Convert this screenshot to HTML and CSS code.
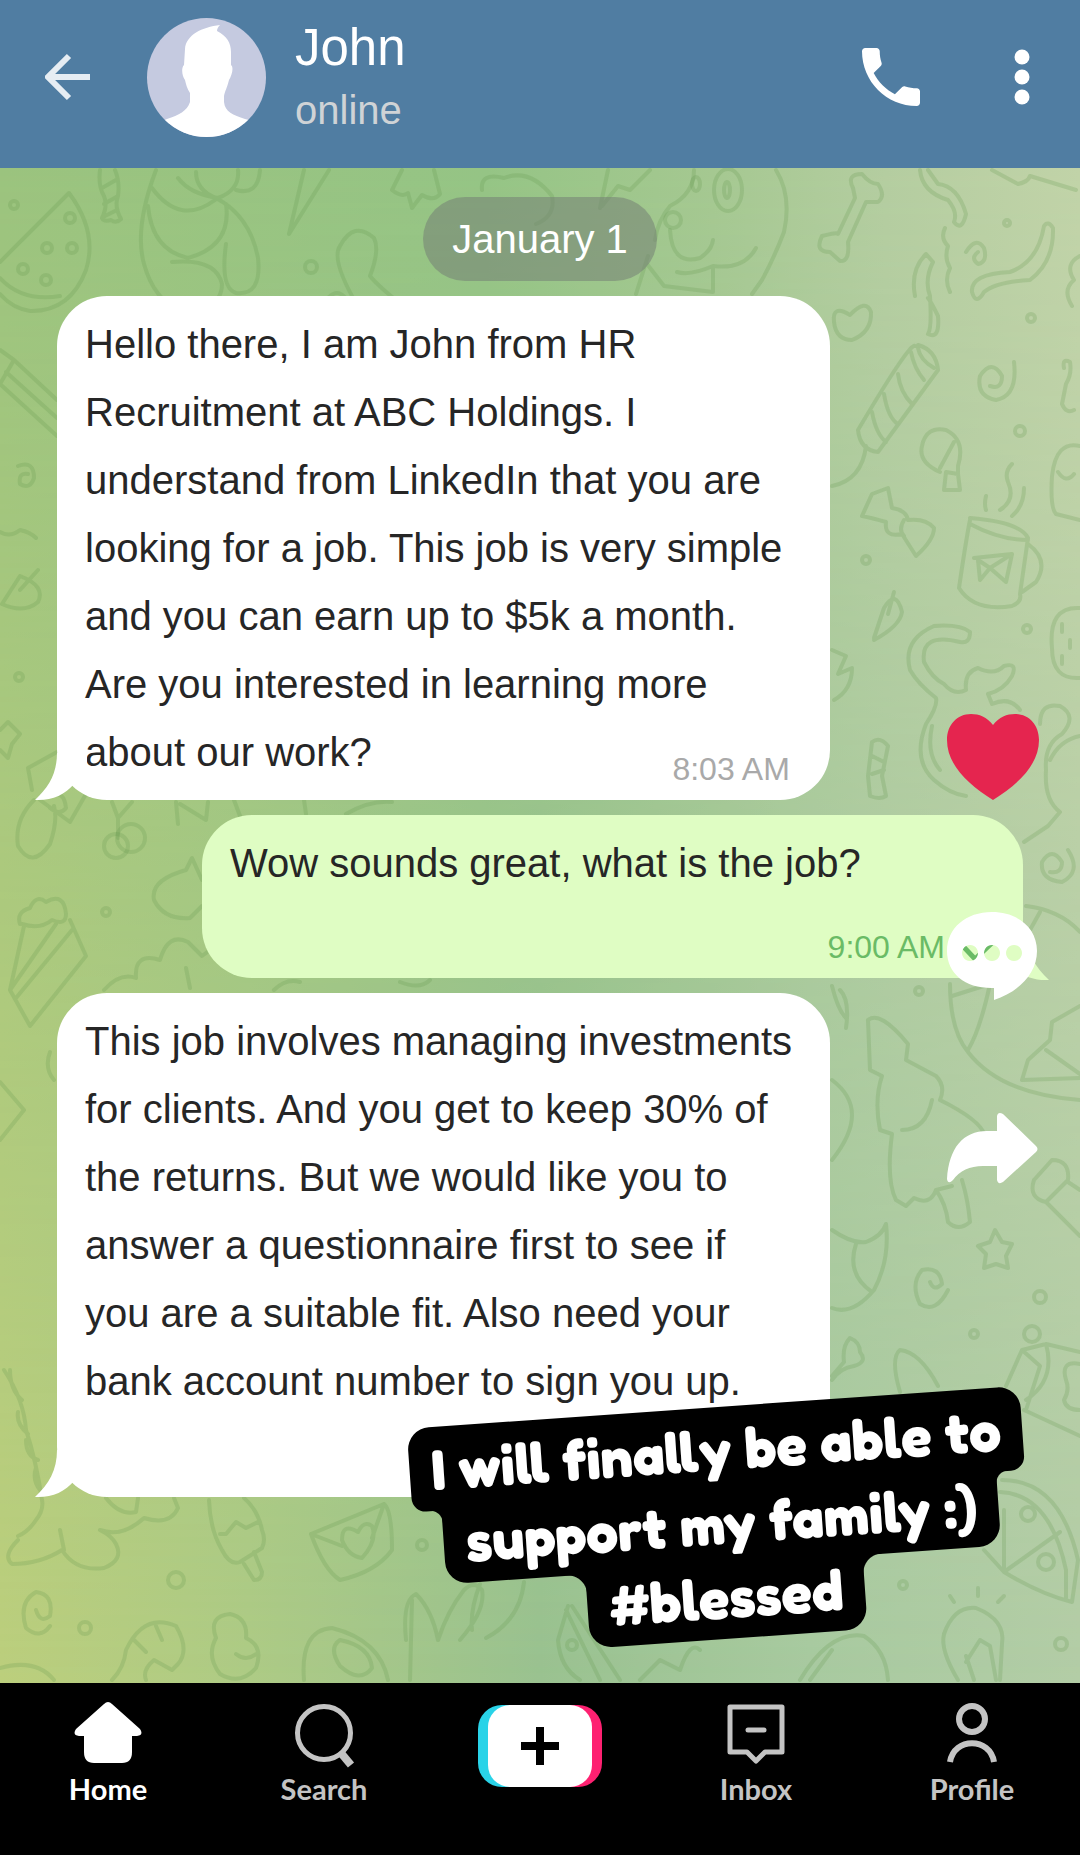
FILE: index.html
```html
<!DOCTYPE html>
<html lang="en">
<head>
<meta charset="utf-8">
<meta name="viewport" content="width=device-width, initial-scale=1">
<title>Chat with John</title>
<link rel="stylesheet" href="styles.css">
</head>
<body>
<div class="app">
  <header class="topbar">
    <button class="icon-button back" aria-label="Back">
      <svg width="46" height="48" viewBox="0 0 46 48"><path d="M3 24H45M24 3L3 24L24 45" fill="none" stroke="#e6edf3" stroke-width="6"/></svg>
    </button>
    <svg class="avatar" width="119" height="119" viewBox="0 0 119 119" role="img" aria-label="John">
      <defs><clipPath id="disc"><circle cx="59.500" cy="59.500" r="59.500"/></clipPath></defs>
      <g clip-path="url(#disc)">
        <rect width="119" height="119" fill="#c5cae0"/>
        <path d="M38 31C39 17 55 9 73 7C71 9 70 11 70 13C80 18 84 25 84 34V47C87 49 85 57 82 62C80 70 78 73 77 78V84C78 94 86 97 98 101C106 103 113 108 119 119H0C5 108 12 104 20 101C32 97 40 93 43 84V75C40 71 39 66 38 62C35 58 34 50 37 47Z" fill="#fff"/>
      </g>
    </svg>
    <div class="contact">
      <h1 class="contact-name">John</h1>
      <p class="contact-status">online</p>
    </div>
    <button class="icon-button" aria-label="Call">
      <svg width="58" height="58" viewBox="3 3 18 18"><path d="M6.620 10.790c1.440 2.830 3.760 5.140 6.590 6.590l2.200-2.200c.270-.270.670-.360 1.020-.240 1.120.370 2.330.570 3.570.570.550 0 1 .450 1 1V20c0 .550-.450 1-1 1-9.390 0-17-7.610-17-17 0-.550.450-1 1-1h3.500c.550 0 1 .450 1 1 0 1.250.200 2.450.570 3.570.110.350.030.740-.250 1.020l-2.200 2.200z" fill="#fff"/></svg>
    </button>
    <button class="icon-button more" aria-label="More options">
      <svg width="16" height="56" viewBox="0 0 16 56" fill="#fff"><circle cx="8" cy="8" r="7.500"/><circle cx="8" cy="28" r="7.500"/><circle cx="8" cy="48" r="7.500"/></svg>
    </button>
  </header>

  <main class="chat">
    <svg class="doodles" viewBox="0 168 1080 1515" preserveAspectRatio="xMidYMin slice" aria-hidden="true">
      <!-- top edge -->
      <path d="M0 262L69 193Q98 232 86 270Q70 312 30 311Q12 308 0 294M0 278Q22 302 60 296"/>
      <circle cx="14" cy="205" r="4"/><circle cx="70" cy="218" r="5"/><circle cx="47" cy="248" r="5"/><circle cx="72" cy="248" r="5"/><circle cx="23" cy="269" r="5"/><circle cx="46" cy="280" r="5"/>
      <path d="M100 170Q98 186 104 196Q108 206 102 218Q104 222 111 220Q116 224 121 219Q114 206 118 196Q120 182 115 170M102 188L116 180M104 204L118 196M105 216L117 210"/>
      <path d="M156 170Q134 228 144 264Q154 300 180 310M152 188Q180 226 215 200M148 206Q152 250 188 258Q232 246 226 204M178 178Q190 194 218 198Q240 190 238 170M196 172Q196 190 216 198M216 198Q250 216 258 258Q262 296 236 293Q220 288 226 244M172 262Q216 258 222 284Q222 300 206 310M236 190Q258 196 260 170"/>
      <path d="M304 170L289 234L329 170M402 170L392 190Q402 198 408 193L412 208L422 195Q434 202 440 194L434 170"/>
      <path d="M360 310Q330 260 340 246Q354 220 374 238Q380 250 370 276Q378 286 402 305M320 310Q338 276 352 310M482 190Q480 172 504 178Q530 168 552 196Q556 216 536 224"/>
      <circle cx="311" cy="267" r="6"/>
      <path d="M600 208L608 170M602 206L618 186L630 190L650 170M694 170Q694 194 670 206Q658 220 655 240M677 272Q690 276 713 266V292L664 286L647 264M670 230Q672 266 700 258Q712 250 713 240M713 266Q744 270 756 248M776 170Q792 196 784 232Q774 258 762 280L752 294M648 256L636 294"/>
      <ellipse cx="728" cy="190" rx="14" ry="21"/><ellipse cx="727" cy="190" rx="3" ry="8"/><circle cx="673" cy="220" r="8"/><ellipse cx="696" cy="184" rx="4" ry="7"/>
      <path d="M853 188Q846 174 862 174Q870 184 878 184Q886 196 878 202L866 202L848 242Q850 262 840 261L830 252Q814 252 822 236Q838 232 838 234L855 198Z"/>
      <path d="M920 170Q922 192 948 200Q958 212 954 222Q962 232 966 214Q958 186 938 184L928 170M992 170L1018 184Q1028 182 1030 176L1076 190M1044 226Q1038 262 1010 272Q970 274 972 292Q976 306 984 292Q996 282 1030 280Q1054 262 1053 228Q1048 220 1044 226M945 228Q940 238 948 246Q944 258 950 268Q944 280 950 292M926 254L933 262Q924 280 930 296Q932 328 928 334Q940 340 938 316Q930 300 928 298M915 296Q910 270 926 254M966 252Q976 236 984 248Q988 262 978 264Q970 258 978 252M1080 256Q1064 264 1074 280Q1062 290 1072 306"/>
      <!-- right column -->
      <path d="M850 315Q832 304 834 322Q836 340 852 340Q872 332 871 312Q866 298 850 315M915 346Q910 342 858 430Q860 450 878 452L938 370Q936 350 918 345M911 352Q914 368 924 380M898 374Q900 392 912 404M884 394Q888 418 898 424M872 412Q876 434 886 442M918 348Q920 360 934 368M866 446Q862 480 832 486"/>
      <path d="M1014 362Q1018 396 996 400Q976 396 980 376Q992 358 1002 376Q1002 390 990 386"/>
      <path d="M940 472Q918 462 922 446Q926 426 946 430Q966 440 958 466L958 474L946 472L944 490L960 490L958 474M954 442L940 468M862 516L872 494L888 488L892 508Q906 510 908 520Q926 518 934 528Q934 540 916 556L902 534Q884 538 886 522Q872 518 862 516M904 520Q898 530 904 536"/>
      <path d="M970 520Q966 540 959 588Q974 612 1012 606Q1022 602 1020 594L1028 538Q1020 522 970 518M970 524Q1000 540 1028 540M1028 544Q1050 560 1036 582L1022 592M974 558L1012 554L1006 582L990 568L980 580L978 560L990 568L1012 554M986 510Q984 504 986 496M1000 510Q1016 500 1008 482Q1004 472 1012 464M1012 516Q1024 506 1024 488"/>
      <path d="M874 638L884 608Q896 588 902 612Q900 626 874 640M888 614L894 592M832 650L846 656L838 674L852 668Q852 690 834 700"/>
      <path d="M970 632Q960 624 934 626Q902 640 910 670Q918 684 936 698Q938 706 926 724Q912 760 934 780Q950 794 966 796M970 632Q970 644 960 642Q920 632 924 662Q932 678 944 684Q954 696 966 690Q964 672 978 668Q994 676 1004 666Q1018 662 1012 676Q1004 690 988 694L992 704Q1010 696 1020 710M932 726Q926 754 940 770"/>
      <path d="M1080 446Q1056 440 1052 476Q1050 508 1056 514L1080 520M1058 472Q1066 484 1074 474M1080 608Q1048 606 1052 648Q1052 680 1080 678M1062 624V632M1070 640V648M1062 656V664M1064 368Q1062 358 1070 362Q1072 374 1066 384L1062 404Q1066 414 1074 410M1040 724Q1040 702 1060 706Q1078 716 1062 734Q1044 744 1046 770Q1044 800 1060 812L1048 826L1024 842M1080 736Q1060 740 1050 760"/>
      <path d="M872 742Q880 736 888 746L882 776L886 796Q880 800 870 796L868 776ZM872 756L884 762M872 774L884 770M1068 850Q1082 872 1062 882Q1040 880 1042 862Q1052 846 1062 862Q1062 874 1050 872"/>
      <path d="M1026 906Q1060 910 1080 932M1040 912L1030 930M950 984Q950 1030 968 1052Q1000 1094 1080 1100M952 996L990 984Q980 1030 968 1050M1080 1006L1052 1022L1050 1040L1028 1060L1022 1080L1080 1078M1046 1050L1080 1074"/>
      <path d="M868 1020Q880 1010 908 1044L906 1060L936 1076Q946 1086 940 1100Q980 1120 984 1134M868 1020L870 1070L882 1076Q874 1100 880 1130L892 1134Q886 1180 896 1200L906 1206L914 1198Q930 1206 936 1190L952 1186M902 1130Q926 1130 932 1100M936 1190Q946 1204 948 1222Q958 1232 970 1222Q968 1200 962 1180M832 1080Q872 1110 832 1160M832 986Q838 1010 846 1018M840 990Q850 1000 846 1028"/>
      <path d="M1034 1180L1052 1160Q1070 1160 1068 1180L1046 1202Q1028 1198 1034 1180M1046 1202L1080 1236M1068 1182L1080 1190"/>
      <path d="M832 1230Q852 1244 866 1242Q882 1236 886 1224Q890 1260 874 1290Q852 1316 832 1308M856 1244Q846 1274 872 1292M995 1230L1002 1242L1012 1244L1006 1256L1008 1268L996 1264L984 1268L986 1254L978 1246L990 1242ZM948 1290Q936 1314 920 1304Q910 1284 922 1270Q940 1266 942 1284Q934 1292 930 1282"/>
      <path d="M832 1376L844 1362Q842 1346 850 1338Q860 1342 860 1352Q868 1362 854 1366Q840 1368 832 1380M900 1392Q890 1358 900 1350Q920 1352 938 1386M1006 1386L1022 1350L1046 1344L1080 1352M1024 1410L1080 1436M1022 1350L1040 1366L1026 1410M1046 1344Q1056 1380 1026 1400M1080 1364Q1060 1360 1066 1380Q1070 1390 1064 1400Q1066 1410 1080 1410"/>
      <path d="M1002 1480Q1060 1480 1078 1560L1072 1602Q1040 1594 1004 1572L984 1550M1000 1492Q1050 1494 1066 1570V1598M1004 1572V1510M1004 1572L1060 1532"/>
      <circle cx="1028" cy="1514" r="7"/><circle cx="1046" cy="1562" r="8"/><circle cx="1032" cy="1334" r="8"/>
      <path d="M958 1680Q940 1650 944 1634Q954 1606 976 1608Q1006 1620 1002 1644L1000 1680M966 1662L980 1640L990 1646L996 1680M974 1680L966 1656M978 1596V1588M954 1602L950 1596M998 1602L1004 1596"/>
      <circle cx="1031" cy="318" r="4"/><circle cx="1020" cy="431" r="5"/><circle cx="866" cy="560" r="4"/><circle cx="1027" cy="629" r="4"/><circle cx="919" cy="991" r="4"/><circle cx="1040" cy="1297" r="6"/><circle cx="974" cy="1334" r="4"/><circle cx="903" cy="1585" r="4"/><circle cx="1061" cy="1644" r="6"/><circle cx="1007" cy="223" r="3"/>
      <!-- left column -->
      <path d="M0 350L14 360L57 400M14 360L0 384L57 436M6 372L57 418M18 466Q34 460 34 478Q30 490 20 484Q18 472 28 474M0 532Q10 538 20 530Q30 532 36 538M2 604L20 576Q46 586 38 602Q24 614 2 604M20 590L38 570"/>
      <path d="M57 752L28 768L32 790M0 730L8 722L20 734L12 744L8 758L0 750M34 800Q14 820 18 846Q32 870 50 844Q58 820 54 806M40 800L70 822L86 794M52 796Q64 790 66 808Q60 816 50 808M112 802L118 818L132 802M118 818V838M176 802L178 824M180 804L206 820L208 802M234 800L240 816M304 800L306 814M346 814Q370 800 392 802"/>
      <circle cx="131" cy="838" r="14"/><circle cx="116" cy="846" r="12"/><circle cx="106" cy="912" r="4"/><circle cx="19" cy="677" r="4"/>
      <path d="M202 880L192 858L186 870Q150 880 154 900Q164 920 190 918L202 906M20 924Q16 912 30 908Q36 894 46 902Q64 892 66 914Q66 926 52 920Q40 930 22 924M24 926L10 990L30 1026L86 956L70 920M10 990L56 924M16 998L72 930M104 990Q120 972 136 978Q134 952 160 960Q168 932 188 942L202 956L210 950M186 968L190 988M274 990Q286 978 300 982M400 982Q420 990 430 980"/>
      <path d="M0 1082L24 1110L0 1140M50 1052Q44 1068 54 1080M4 1370Q24 1400 26 1430Q36 1460 42 1500Q44 1510 36 1520Q28 1532 18 1536M10 1370Q10 1390 22 1400M18 1412Q16 1424 28 1434M26 1440Q26 1456 38 1460M36 1468Q32 1480 40 1490"/>
      <!-- bottom edge -->
      <path d="M18 1540Q2 1556 12 1564Q40 1564 62 1550Q76 1572 104 1568Q124 1560 116 1544Q112 1536 100 1530Q122 1538 144 1518Q170 1526 178 1508L174 1498M60 1530L64 1550M106 1498Q120 1516 136 1512L138 1498M209 1500Q210 1530 222 1550Q230 1566 240 1562L262 1548Q266 1540 262 1530Q258 1510 244 1498M220 1534L226 1534L236 1522L246 1528L258 1522M244 1564L254 1580Q262 1580 262 1572L254 1552"/>
      <path d="M311 1534L384 1504Q392 1510 392 1550Q376 1572 340 1580Q324 1570 311 1534M311 1534L342 1546M384 1504L372 1538M358 1532Q342 1522 342 1540Q348 1556 362 1558Q378 1540 372 1526Q364 1520 358 1532M50 1626Q40 1640 26 1628Q18 1602 36 1592Q54 1594 50 1616Q40 1624 36 1610"/>
      <path d="M112 1680Q124 1668 126 1650Q144 1612 176 1626Q190 1650 178 1664L172 1670L154 1660Q142 1670 146 1680M156 1626L162 1640M134 1640L146 1652M216 1638Q208 1616 230 1614Q248 1618 246 1638Q264 1646 256 1668Q240 1686 220 1674Q206 1656 216 1638M236 1654Q246 1662 256 1654M0 1668Q36 1658 54 1680"/>
      <path d="M304 1680Q300 1630 332 1628Q380 1640 388 1680M340 1640Q370 1646 372 1668Q360 1684 340 1666Q328 1648 340 1640M406 1640Q402 1600 416 1594Q432 1610 438 1640Q448 1610 464 1590Q474 1580 482 1590Q486 1610 460 1640M412 1600L410 1680M524 1582Q520 1620 486 1638M480 1584Q470 1610 472 1630M568 1606L558 1640Q560 1668 580 1680M572 1606L620 1680M566 1610L600 1680M640 1680L660 1660L680 1670Q690 1640 700 1650M800 1680Q830 1630 864 1636Q886 1650 888 1680M832 1650L810 1680"/>
      <circle cx="176" cy="1580" r="8"/><circle cx="85" cy="1628" r="6"/><circle cx="422" cy="1545" r="5"/><circle cx="572" cy="1645" r="5"/>
    </svg>

    <time class="date-pill">January 1</time>

    <article class="bubble incoming">
      <p class="message">Hello there, I am John from HR Recruitment at ABC Holdings. I understand from LinkedIn that you are looking for a job. This job is very simple and you can earn up to $5k a month. Are you interested in learning more about our work?</p>
      <time class="stamp">8:03 AM</time>
      <svg class="tail" width="52" height="48" viewBox="0 0 52 48" aria-hidden="true"><path d="M22 0C22 20 14 34 0 47C16 48 30 42 39 31L52 20V0Z" fill="#fff"/></svg>
    </article>

    <article class="bubble outgoing">
      <p class="message">Wow sounds great, what is the job?</p>
      <div class="stamp">
        <time>9:00 AM</time>
        <svg width="36" height="34" viewBox="0 0 36 34" role="img" aria-label="Read"><path d="M1 13L16 29L35 11" fill="none" stroke="#6abb66" stroke-width="5"/></svg>
      </div>
      <svg class="tail" width="52" height="48" viewBox="0 0 52 48" aria-hidden="true"><path d="M30 0C30 20 38 34 52 47C36 48 22 42 13 31L0 20V0Z" fill="#dffdc3"/></svg>
    </article>

    <article class="bubble incoming tall">
      <p class="message">This job involves managing investments for clients. And you get to keep 30% of the returns. But we would like you to answer a questionnaire first to see if you are a suitable fit. Also need your bank account number to sign you up.</p>
      <svg class="tail" width="52" height="48" viewBox="0 0 52 48" aria-hidden="true"><path d="M22 0C22 20 14 34 0 47C16 48 30 42 39 31L52 20V0Z" fill="#fff"/></svg>
    </article>

    <div class="actions">
      <button class="icon-button" aria-label="Like">
        <svg width="92" height="86" viewBox="0 0 92 86"><path d="M46 11C52 3 60 0 68 0C82 0 92 11 92 26C92 50 72 70 46 86C20 70 0 50 0 26C0 11 10 0 24 0C32 0 40 3 46 11Z" fill="#e5254f"/></svg>
      </button>
      <button class="icon-button" aria-label="Comments">
        <svg width="92" height="88" viewBox="0 0 92 88"><path fill-rule="evenodd" d="M45 0C71 0 90 16 90 39C90 62 71 80 47 88V76C19 77 0 62 0 39C0 16 19 0 45 0ZM23 33a8 8 0 1 0 .010 0ZM45 33a8 8 0 1 0 .010 0ZM67 33a8 8 0 1 0 .010 0Z" fill="#fff"/></svg>
      </button>
      <button class="icon-button" aria-label="Share">
        <svg width="92" height="72" viewBox="0 0 92 72"><path d="M50 19V4Q51 -1 56 2L89 34Q92 37 89 40L56 70Q51 73 50 68V54H36Q16 54 6 68Q1 73 0 67C2 36 16 19 40 19Z" fill="#fff"/></svg>
      </button>
    </div>

    <p class="caption">
      <span class="caption-line">I will finally be able to</span>
      <span class="caption-line">support my family :)</span>
      <span class="caption-line">#blessed</span>
    </p>
  </main>

  <nav class="tabbar" aria-label="Main">
    <a class="tab active" href="#home">
      <svg width="68" height="68" viewBox="0 0 68 68"><path d="M30 3Q34 -1 38 3L66 28Q70 34 63 35H58V51Q58 62 48 62H20Q10 62 10 51V35H5Q-2 34 2 28Z" fill="#fff"/></svg>
      <span>Home</span>
    </a>
    <a class="tab" href="#search">
      <svg width="68" height="68" viewBox="0 0 68 68" fill="none" stroke="#c4c4c4"><circle cx="34" cy="32" r="26.500" stroke-width="5"/><path d="M51 52L61 64" stroke-width="8"/></svg>
      <span>Search</span>
    </a>
    <button class="create" aria-label="Create">
      <svg width="38" height="38" viewBox="0 0 38 38"><path d="M0 19H38M19 0V38" stroke="#000" stroke-width="8"/></svg>
    </button>
    <a class="tab" href="#inbox">
      <svg width="68" height="68" viewBox="0 0 68 68" fill="none" stroke="#c4c4c4" stroke-width="5"><path d="M8 6H60V51H43L34 60L25 51H8Z" stroke-linejoin="round"/><path d="M26 29H42" stroke-linecap="round"/></svg>
      <span>Inbox</span>
    </a>
    <a class="tab" href="#profile">
      <svg width="68" height="68" viewBox="0 0 68 68" fill="none" stroke="#c4c4c4" stroke-width="6"><circle cx="34" cy="18" r="13"/><path d="M12 61C16 36 52 36 56 61"/></svg>
      <span>Profile</span>
    </a>
  </nav>
</div>
</body>
</html>
```
FILE: styles.css
```css
* {
  box-sizing: border-box;
}

body {
  margin: 0;
  font-family: "Liberation Sans", Arial, sans-serif;
  color: #262626;
  background: #000;
}

h1,
p {
  margin: 0;
  font-weight: 400;
}

svg {
  display: block;
}

.app {
  display: flex;
  flex-direction: column;
  min-height: 100vh;
}

.icon-button {
  padding: 0;
  border: 0;
  background: none;
  cursor: pointer;
}

/* Header */
.topbar {
  display: flex;
  align-items: center;
  height: 168px;
  padding: 0 50px 14px 45px;
  background: #507da2;
  color: #fff;
}

.avatar {
  margin-left: 56px;
}

.contact {
  flex: 1;
  padding: 2px 0 0 29px;
}

.contact-name {
  font-size: 51px;
  line-height: 60px;
}

.contact-status {
  margin-top: 4px;
  font-size: 40px;
  line-height: 56px;
  color: #cfd3d6;
}

.more {
  margin-left: 94px;
}

/* Conversation */
.chat {
  position: relative;
  flex: 1;
  display: flex;
  flex-direction: column;
  gap: 15px;
  padding: 29px 57px 186px;
  overflow: hidden;
  background: linear-gradient(90deg, #bccf7d 0%, #aecb85 23%, #9ac290 50%, #a8caa0 75%, #b3cda6 100%);
}

.chat::before {
  content: "";
  position: absolute;
  inset: 0;
  background: linear-gradient(90deg, #9bc37e 0%, #95c485 45%, #a5c891 66%, #b4cda0 82%, #c1d3a8 100%);
  mask-image: linear-gradient(#000 0%, rgba(0, 0, 0, 0.5) 45%, transparent 100%);
}

.doodles {
  position: absolute;
  inset: 0;
  width: 100%;
  height: 100%;
  fill: none;
  stroke: #63964c;
  stroke-opacity: 0.23;
  stroke-width: 4;
  stroke-linecap: round;
  stroke-linejoin: round;
}

.date-pill {
  position: relative;
  align-self: center;
  padding: 0 29px;
  border-radius: 42px;
  background: rgba(116, 128, 116, 0.55);
  color: #fff;
  font-size: 40px;
  line-height: 84px;
}

.bubble {
  position: relative;
  display: grid;
  min-height: 163px;
  padding: 14px 36px 14px 28px;
  border-radius: 50px;
}

.incoming {
  align-self: flex-start;
  width: 80%;
  background: #fff;
}

.outgoing {
  align-self: flex-end;
  width: 85%;
  background: #dffdc3;
}

.tall {
  min-height: 504px;
}

.message,
.stamp {
  grid-area: 1 / 1;
}

.message {
  font-size: 40px;
  line-height: 68px;
}

.stamp {
  display: flex;
  align-items: center;
  gap: 14px;
  place-self: end;
  margin-right: 4px;
  font-size: 32px;
  line-height: 34px;
  color: #a9a9a9;
}

.outgoing .stamp {
  margin-right: -8px;
  color: #6abb66;
}

.tail {
  position: absolute;
  bottom: -1px;
}

.incoming .tail {
  left: -22px;
}

.outgoing .tail {
  right: -26px;
  bottom: -3px;
}

/* Video actions floating over the conversation */
.actions {
  position: absolute;
  top: 546px;
  right: 41px;
  display: flex;
  flex-direction: column;
  gap: 112px;
}

/* Tilted caption sticker */
.caption {
  position: absolute;
  right: 52px;
  bottom: 44px;
  display: flex;
  flex-direction: column;
  align-items: center;
  padding: 5px 0;
  color: #fff;
  font-family: Fredoka, "Baloo 2", Lato, sans-serif;
  font-size: 57px;
  font-weight: 900;
  line-height: 74px;
  white-space: nowrap;
  transform: rotate(-4deg);
}

.caption-line {
  position: relative;
  margin: -5px 0;
  padding: 5px 22px;
  border-radius: 22px 22px 14px 14px;
  background: #000;
}

.caption-line + .caption-line {
  border-radius: 0 0 22px 22px;
}

/* Inner corners where a line is narrower than the one above */
.caption-line + .caption-line::before,
.caption-line + .caption-line::after {
  content: "";
  position: absolute;
  top: 9px;
  width: 13px;
  height: 13px;
}

.caption-line + .caption-line::before {
  right: calc(100% - 1px);
  background: radial-gradient(circle at 0 100%, transparent 12px, #000 13px);
}

.caption-line + .caption-line::after {
  left: calc(100% - 1px);
  background: radial-gradient(circle at 100% 100%, transparent 12px, #000 13px);
}

.caption-line:last-child::before,
.caption-line:last-child::after {
  width: 20px;
  height: 20px;
}

.caption-line:last-child::before {
  background: radial-gradient(circle at 0 100%, transparent 19px, #000 20px);
}

.caption-line:last-child::after {
  background: radial-gradient(circle at 100% 100%, transparent 19px, #000 20px);
}

/* Bottom navigation */
.tabbar {
  display: grid;
  grid-template-columns: repeat(5, 1fr);
  justify-items: center;
  align-items: start;
  height: 172px;
  padding-top: 18px;
  background: #000;
}

.tab {
  display: flex;
  flex-direction: column;
  align-items: center;
  gap: 2px;
  color: #c4c4c4;
  font-family: Lato, sans-serif;
  font-size: 29px;
  font-weight: 700;
  line-height: 36px;
  text-decoration: none;
}

.active {
  color: #fff;
}

.create {
  position: relative;
  display: grid;
  place-items: center;
  width: 124px;
  height: 82px;
  margin-top: 4px;
  padding: 0;
  border: 0;
  border-radius: 24px;
  background: linear-gradient(90deg, #29d3e8 50%, #fe2171 50%);
  cursor: pointer;
}

.create::before {
  content: "";
  position: absolute;
  inset: 0 10px;
  border-radius: 22px;
  background: #fff;
}

.create svg {
  position: relative;
}
```
